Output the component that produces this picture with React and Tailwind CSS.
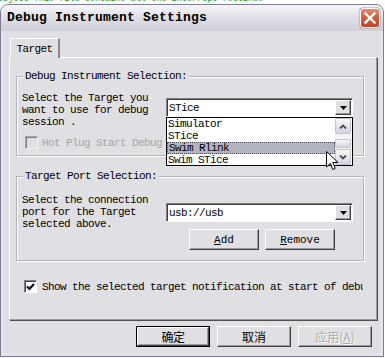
import React from "react";

const RAISED =
  "bg-[#e0dfe3] border border-t-white border-l-white border-r-[#404040] border-b-[#404040] shadow-[inset_-1px_-1px_0_#9d9da1]";
const SUNKEN =
  "border border-t-[#808080] border-l-[#808080] border-r-white border-b-white shadow-[inset_1px_1px_0_#404040]";
const SCROLLBTN =
  "rounded-[2px] border border-[#c3c3cf] bg-[#e6e6ec] bg-linear-to-b from-[#f9f9fb] to-[#d3d3dd] flex items-center justify-center";

function Check({ checked, disabled }) {
  return (
    <span
      className={`w-[13px] h-[13px] shrink-0 flex items-center justify-center ${SUNKEN} ${
        disabled ? "bg-[#e0dfe3] opacity-60" : "bg-white"
      }`}
    >
      {checked && (
        <svg width="9" height="8" viewBox="0 0 9 8">
          <path d="M1 3.5 L3.5 6 L8 1" stroke="#000" strokeWidth="2" fill="none" />
        </svg>
      )}
    </span>
  );
}

function Combo({ value, children }) {
  return (
    <div className={`relative w-[187px] h-[19px] bg-white flex items-center ${SUNKEN}`}>
      <span className="pl-[2px] flex-1">{value}</span>
      <span className={`w-[16px] h-[15px] mr-[1px] flex items-center justify-center ${RAISED}`}>
        <svg width="7" height="4" viewBox="0 0 7 4">
          <path d="M0 0h7L3.5 4z" fill="#000" />
        </svg>
      </span>
      {children}
    </div>
  );
}

function Chevron({ up }) {
  return (
    <svg width="8" height="5" viewBox="0 0 8 5">
      <path d={up ? "M1 4.5 L4 1.5 L7 4.5" : "M1 0.5 L4 3.5 L7 0.5"} stroke="#4a4a5e" strokeWidth="1.8" fill="none" />
    </svg>
  );
}

function CloseIcon() {
  return (
    <svg width="22" height="22" viewBox="0 0 22 22">
      <defs>
        <linearGradient id="closeRed" x1="0" y1="0" x2="0" y2="1">
          <stop offset="0" stopColor="#ec8e74" />
          <stop offset="0.45" stopColor="#d65b3f" />
          <stop offset="1" stopColor="#c2432b" />
        </linearGradient>
      </defs>
      <rect x="0.5" y="0.5" width="21" height="21" rx="3" fill="#a89a9e" />
      <rect x="1.5" y="1.5" width="19" height="19" rx="2.5" fill="url(#closeRed)" stroke="#fff" strokeWidth="1" />
      <path d="M6.5 6.5 L15.5 15.5 M15.5 6.5 L6.5 15.5" stroke="#fff" strokeWidth="2.4" strokeLinecap="square" />
    </svg>
  );
}

function DropList() {
  const items = ["Simulator", "STice", "Swim Rlink", "Swim STice"];
  return (
    <div className="absolute left-[-1px] top-[18px] w-[187px] h-[49px] border border-black bg-white flex z-20">
      <div className="flex-1 flex flex-col">
        {items.map((it) => (
          <div
            key={it}
            className={`h-[12px] pl-[1px] ${
              it === "Swim Rlink" ? "bg-[#b2b4bf] border border-dotted border-[#50505a] leading-[10px]" : ""
            }`}
          >
            {it}
          </div>
        ))}
      </div>
      <div className="w-[16px] mr-[1px] flex flex-col bg-[#f4f4f7]">
        <div className={`h-[16px] ${SCROLLBTN}`}>
          <Chevron up />
        </div>
        <div className="flex-1 pt-[5px]">
          <div className={`h-[9px] ${SCROLLBTN}`} />
        </div>
        <div className={`h-[16px] ${SCROLLBTN}`}>
          <Chevron />
        </div>
      </div>
    </div>
  );
}

function Group({ title, children, className = "" }) {
  return (
    <fieldset className={`ml-[6px] w-[348px] border border-[#b4b4be] shadow-[inset_1px_1px_0_#fff,1px_1px_0_#fff] pl-[5px] ${className}`}>
      <legend className="ml-[1px] px-[2px] bg-[#e0dfe3] leading-[12px]">{title}</legend>
      {children}
    </fieldset>
  );
}

function Btn({ children, w = "w-[70px]", className = "" }) {
  return (
    <div className={`${w} h-[21px] flex items-center justify-center tracking-normal ${RAISED} ${className}`}>
      {children}
    </div>
  );
}

export default function App() {
  return (
    <div className="relative w-[385px] h-[358px] bg-white overflow-hidden font-['Liberation_Mono','Noto_Sans_CJK_SC',monospace] text-[11px] leading-[12px] tracking-[-0.6px] text-black">
      {/* editor text behind the dialog */}
      <div className="h-[4px] overflow-hidden">
        <div className="-mt-[5px] -ml-[2px] text-[8.5px] leading-[9px] tracking-normal text-[#2c9c2c] whitespace-nowrap">
          Object This file contains all the interrupt routines
        </div>
      </div>

      {/* window */}
      <div className="w-[384px] h-[353px] rounded-t-[8px] border border-[#7c7c96] bg-[#e4e4ec] flex flex-col">
        {/* title bar */}
        <div className="h-[26px] rounded-t-[7px] bg-[#dcdce4] bg-linear-to-b from-[#f6f6f9] via-[#dedee6] to-[#d0d0da] flex items-center justify-between pl-[6px] pr-[2px]">
          <span className="text-[13px] font-bold tracking-[0.2px]">Debug Instrument Settings</span>
          <CloseIcon />
        </div>

        {/* client area */}
        <div className="mx-[3px] h-[322px] bg-[#e0dfe3] pt-[7px] pl-[5px] pr-[3px] flex flex-col">
          {/* tab */}
          <div className="ml-[1px] w-[50px] h-[20px] -mb-[1px] relative z-10 bg-[#e0dfe3] border-t border-l border-white border-r-2 border-r-[#8a8a8e] flex items-center justify-center">
            Target
          </div>

          {/* tab panel */}
          <div className="w-[368px] h-[263px] border border-t-white border-l-white border-r-[#9a9aa0] border-b-[#9a9aa0] shadow-[1px_1px_0_#505050]">
            <Group title="Debug Instrument Selection:" className="mt-[12px] pt-[10px] pb-[6px]">
              <div className="flex">
                <div className="w-[144px]">
                  Select the Target you
                  <br />
                  want to use for debug
                  <br />
                  session .
                </div>
                <div className="mt-[6px]">
                  <Combo value="STice">
                    <DropList />
                  </Combo>
                </div>
              </div>
              <div className="mt-[8px] ml-[3px] flex items-center gap-[4px] text-[#a6a6ac]">
                <Check disabled />
                <span className="w-[124px] overflow-hidden whitespace-nowrap">Hot Plug Start Debug</span>
              </div>
            </Group>

            <Group title="Target Port Selection:" className="mt-[14px] pt-[12px] pb-[10px]">
              <div className="flex">
                <div className="w-[144px]">
                  Select the connection
                  <br />
                  port for the Target
                  <br />
                  selected above.
                </div>
                <div className="mt-[9px]">
                  <Combo value="usb://usb" />
                  <div className="mt-[7px] pl-[23px] flex gap-[6px]">
                    <Btn>
                      <span className="underline">A</span>dd
                    </Btn>
                    <Btn>
                      <span className="underline">R</span>emove
                    </Btn>
                  </div>
                </div>
              </div>
            </Group>

            <div className="mt-[19px] ml-[14px] flex items-center gap-[5px]">
              <Check checked />
              <span className="w-[321px] overflow-hidden whitespace-nowrap">
                Show the selected target notification at start of debug session
              </span>
            </div>
          </div>

          {/* dialog buttons */}
          <div className="mt-[6px] pr-[5px] flex justify-end gap-[7px] font-['Noto_Sans_CJK_SC',sans-serif] text-[12px]">
            <div className="w-[74px] h-[21px] border border-black">
              <div className={`w-full h-full flex items-center justify-center ${RAISED}`}>确定</div>
            </div>
            <Btn w="w-[74px]">取消</Btn>
            <Btn w="w-[74px]" className="text-[#a8a8ae] [text-shadow:1px_1px_0_#fff]">
              应用(<span className="underline">A</span>)
            </Btn>
          </div>
        </div>
      </div>

      {/* mouse cursor */}
      <svg className="absolute left-[326px] top-[151px] z-30" width="13" height="20" viewBox="0 0 13 20">
        <path d="M0.5 0.5 L0.5 16 L4.3 12.3 L6.8 18.5 L9.3 17.4 L6.8 11.4 L12 11.4 Z" fill="#fff" stroke="#000" strokeWidth="1" />
      </svg>
    </div>
  );
}
